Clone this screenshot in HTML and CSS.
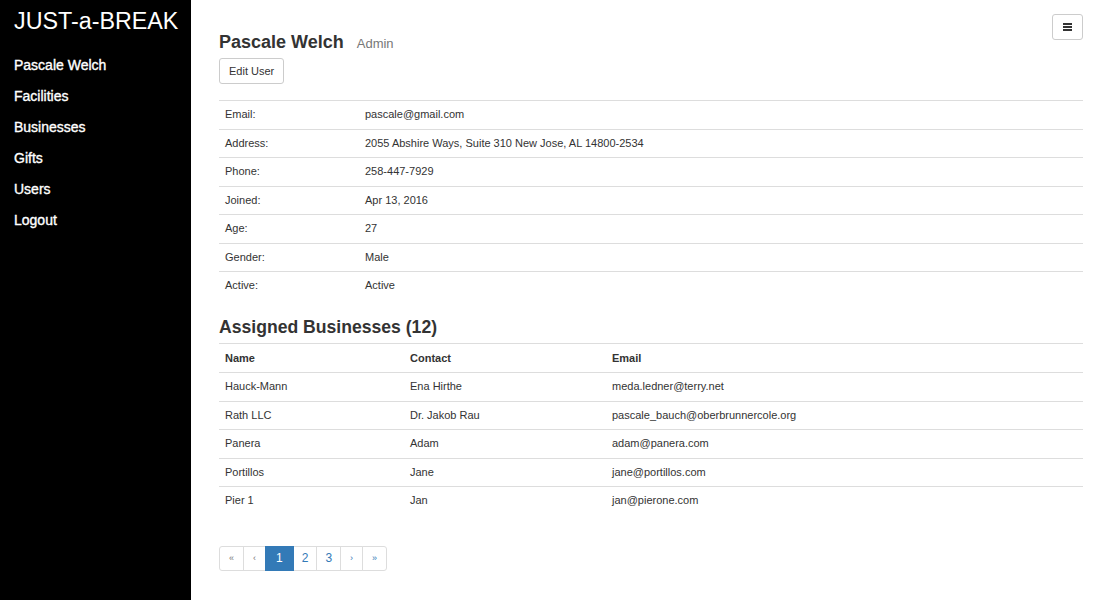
FILE: index.html
```html
<!DOCTYPE html>
<html lang="en">
<head>
<meta charset="utf-8">
<title>JUST-a-BREAK – Pascale Welch</title>
<link rel="stylesheet" href="styles.css">
</head>
<body>
<aside class="sidebar">
  <div class="brand">JUST-a-BREAK</div>
  <nav class="side-nav">
    <a href="#">Pascale Welch</a>
    <a href="#">Facilities</a>
    <a href="#">Businesses</a>
    <a href="#">Gifts</a>
    <a href="#">Users</a>
    <a href="#">Logout</a>
  </nav>
</aside>
<main class="main">
  <div class="header">
    <div class="header-left">
      <div class="title-row">
        <h1 class="title">Pascale Welch</h1>
        <span class="role">Admin</span>
      </div>
      <button class="btn">Edit User</button>
    </div>
    <button class="menu-btn" aria-label="Menu">
      <svg width="9" height="8" viewBox="0 0 9 8"><rect x="0" y="0" width="9" height="2" fill="#333"/><rect x="0" y="3" width="9" height="2" fill="#333"/><rect x="0" y="6" width="9" height="2" fill="#333"/></svg>
    </button>
  </div>

  <table class="table details">
    <tbody>
      <tr><td class="label">Email:</td><td>pascale@gmail.com</td></tr>
      <tr><td class="label">Address:</td><td>2055 Abshire Ways, Suite 310 New Jose, AL 14800-2534</td></tr>
      <tr><td class="label">Phone:</td><td>258-447-7929</td></tr>
      <tr><td class="label">Joined:</td><td>Apr 13, 2016</td></tr>
      <tr><td class="label">Age:</td><td>27</td></tr>
      <tr><td class="label">Gender:</td><td>Male</td></tr>
      <tr><td class="label">Active:</td><td>Active</td></tr>
    </tbody>
  </table>

  <h2 class="section-title">Assigned Businesses (12)</h2>
  <table class="table businesses">
    <thead>
      <tr><th class="col-name">Name</th><th class="col-contact">Contact</th><th>Email</th></tr>
    </thead>
    <tbody>
      <tr><td>Hauck-Mann</td><td>Ena Hirthe</td><td>meda.ledner@terry.net</td></tr>
      <tr><td>Rath LLC</td><td>Dr. Jakob Rau</td><td>pascale_bauch@oberbrunnercole.org</td></tr>
      <tr><td>Panera</td><td>Adam</td><td>adam@panera.com</td></tr>
      <tr><td>Portillos</td><td>Jane</td><td>jane@portillos.com</td></tr>
      <tr><td>Pier 1</td><td>Jan</td><td>jan@pierone.com</td></tr>
    </tbody>
  </table>

  <ul class="pagination">
    <li class="page disabled arrow">&laquo;</li>
    <li class="page disabled arrow">&lsaquo;</li>
    <li class="page active">1</li>
    <li class="page">2</li>
    <li class="page">3</li>
    <li class="page arrow">&rsaquo;</li>
    <li class="page arrow">&raquo;</li>
  </ul>
</main>
</body>
</html>
```

FILE: styles.css
```css
* { box-sizing: border-box; }

html, body {
  margin: 0;
  padding: 0;
  height: 100%;
}

body {
  display: flex;
  font-family: "Liberation Sans", Arial, Helvetica, sans-serif;
  color: #333;
  background: #fff;
}

.sidebar {
  width: 191px;
  flex: none;
  min-height: 100vh;
  background: #000;
  color: #fff;
  padding: 7px 0 0 14px;
}

.brand {
  font-size: 23.3px;
  line-height: 28px;
  color: #fff;
  margin-bottom: 15px;
}

.side-nav {
  display: flex;
  flex-direction: column;
}

.side-nav a {
  color: #fff;
  text-decoration: none;
  font-size: 14px;
  line-height: 31px;
  -webkit-text-stroke: 0.35px #fff;
}

.main {
  flex: 1;
  padding: 14px 25px 0 28px;
}

.header {
  display: flex;
  justify-content: space-between;
  align-items: flex-start;
}

.header-left {
  padding-top: 18px;
}

.title-row {
  display: flex;
  align-items: baseline;
  gap: 13px;
}

.title {
  margin: 0;
  font-size: 18px;
  line-height: 20px;
  font-weight: bold;
  color: #333;
}

.role {
  font-size: 13px;
  color: #777;
}

.btn {
  margin-top: 6px;
  height: 26px;
  padding: 0 9px;
  font-family: inherit;
  font-size: 11px;
  color: #333;
  background: #fff;
  border: 1px solid #ccc;
  border-radius: 3px;
}

.menu-btn {
  width: 31px;
  height: 26px;
  padding: 0;
  display: flex;
  align-items: center;
  justify-content: center;
  background: #fff;
  border: 1px solid #ccc;
  border-radius: 3px;
}

.table {
  width: 100%;
  border-collapse: collapse;
  font-size: 11px;
}

.details {
  margin-top: 16px;
}

.table td,
.table th {
  padding: 5px 6px;
  line-height: 17.57px;
  border-top: 1px solid #ddd;
  text-align: left;
  vertical-align: top;
}

.table th {
  font-weight: bold;
  line-height: 18px;
}

.details .label {
  width: 140px;
}

.section-title {
  margin: 17px 0 6px;
  font-size: 17.6px;
  line-height: 20px;
  font-weight: bold;
  color: #333;
}

.col-name { width: 185px; }
.col-contact { width: 202px; }

.pagination {
  list-style: none;
  margin: 31px 0 0;
  padding: 0;
  display: inline-flex;
}

.page {
  height: 25px;
  padding: 0 8px;
  display: flex;
  align-items: center;
  justify-content: center;
  font-size: 12px;
  color: #337ab7;
  background: #fff;
  border: 1px solid #ddd;
  margin-left: -1px;
}

.page:first-child {
  margin-left: 0;
  border-radius: 3px 0 0 3px;
}

.page:last-child {
  border-radius: 0 3px 3px 0;
}

.page.arrow {
  font-size: 9px;
  padding: 0 9px;
}

.page.disabled {
  color: #777;
}

.page.active {
  background: #337ab7;
  border-color: #337ab7;
  color: #fff;
  padding: 0 10px;
  position: relative;
  z-index: 1;
}
```
